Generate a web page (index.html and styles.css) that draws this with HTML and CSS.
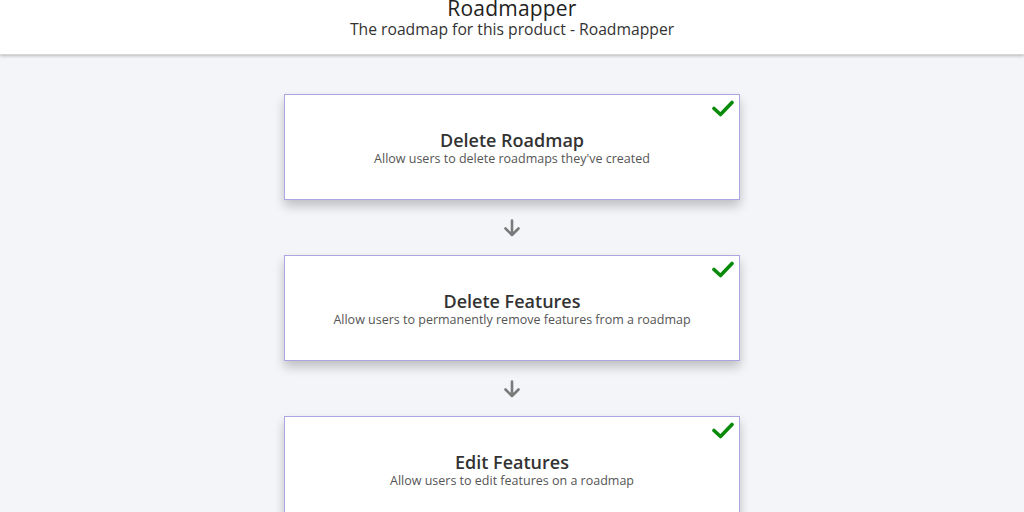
FILE: index.html
```html
<!DOCTYPE html>
<html lang="en">
<head>
<meta charset="utf-8">
<title>Roadmapper</title>
<link rel="stylesheet" href="styles.css">
</head>
<body>
<header class="topbar">
  <h1 class="app-title">Roadmapper</h1>
  <p class="app-sub">The roadmap for this product - Roadmapper</p>
</header>
<main class="roadmap">
  <section class="card">
    <svg class="check" viewBox="0 0 22 17" width="22" height="17"><path d="M2 8.5 L8.5 14.5 L20 2.5" fill="none" stroke="#0a8a0a" stroke-width="3.6" stroke-linecap="round" stroke-linejoin="round"/></svg>
    <h2 class="card-title">Delete Roadmap</h2>
    <p class="card-desc">Allow users to delete roadmaps they've created</p>
  </section>
  <div class="arrow"><svg viewBox="0 0 18 18" width="18" height="18"><path d="M9 1.5 V16 M2.5 9.5 L9 16 L15.5 9.5" fill="none" stroke="#7a7a7a" stroke-width="2.6" stroke-linecap="round" stroke-linejoin="round"/></svg></div>
  <section class="card">
    <svg class="check" viewBox="0 0 22 17" width="22" height="17"><path d="M2 8.5 L8.5 14.5 L20 2.5" fill="none" stroke="#0a8a0a" stroke-width="3.6" stroke-linecap="round" stroke-linejoin="round"/></svg>
    <h2 class="card-title">Delete Features</h2>
    <p class="card-desc">Allow users to permanently remove features from a roadmap</p>
  </section>
  <div class="arrow"><svg viewBox="0 0 18 18" width="18" height="18"><path d="M9 1.5 V16 M2.5 9.5 L9 16 L15.5 9.5" fill="none" stroke="#7a7a7a" stroke-width="2.6" stroke-linecap="round" stroke-linejoin="round"/></svg></div>
  <section class="card">
    <svg class="check" viewBox="0 0 22 17" width="22" height="17"><path d="M2 8.5 L8.5 14.5 L20 2.5" fill="none" stroke="#0a8a0a" stroke-width="3.6" stroke-linecap="round" stroke-linejoin="round"/></svg>
    <h2 class="card-title">Edit Features</h2>
    <p class="card-desc">Allow users to edit features on a roadmap</p>
  </section>
</main>
</body>
</html>
```
FILE: styles.css
```css
* { box-sizing: border-box; }
html, body { margin: 0; padding: 0; }
body {
  background: #f4f5f9;
  font-family: "Open Sans", "Noto Sans", sans-serif;
  color: #333;
  overflow: hidden;
  height: 512px;
}
.topbar {
  background: #fff;
  height: 55px;
  display: flex;
  flex-direction: column;
  align-items: center;
  text-align: center;
  box-shadow: 0 1px 3px rgba(0,0,0,0.25);
  border-bottom: 1px solid #d8d8d8;
  position: relative;
  z-index: 1;
}
.app-title {
  margin: -4px 0 0;
  font-size: 21px;
  font-weight: 400;
  line-height: 24px;
  color: #222;
  letter-spacing: 0.2px;
}
.app-sub {
  margin: 0;
  font-size: 15.7px;
  line-height: 18px;
  color: #333;
}
.roadmap {
  display: flex;
  flex-direction: column;
  align-items: center;
  padding-top: 39px;
}
.card {
  position: relative;
  width: 456px;
  height: 106px;
  background: #fff;
  border: 1px solid #aaa6e0;
  box-shadow: 0 6px 10px rgba(0,0,0,0.22);
  display: flex;
  flex-direction: column;
  align-items: center;
  justify-content: center;
  padding-top: 1px;
}
.check {
  position: absolute;
  top: 5px;
  right: 5px;
}
.card-title {
  margin: 0;
  font-size: 18px;
  font-weight: 600;
  line-height: 22px;
  color: #333;
}
.card-desc {
  margin: 0;
  font-size: 12.5px;
  line-height: 16px;
  color: #555;
}
.arrow {
  height: 55px;
  display: flex;
  align-items: center;
  justify-content: center;
}
.arrow svg { display: block; }
```
